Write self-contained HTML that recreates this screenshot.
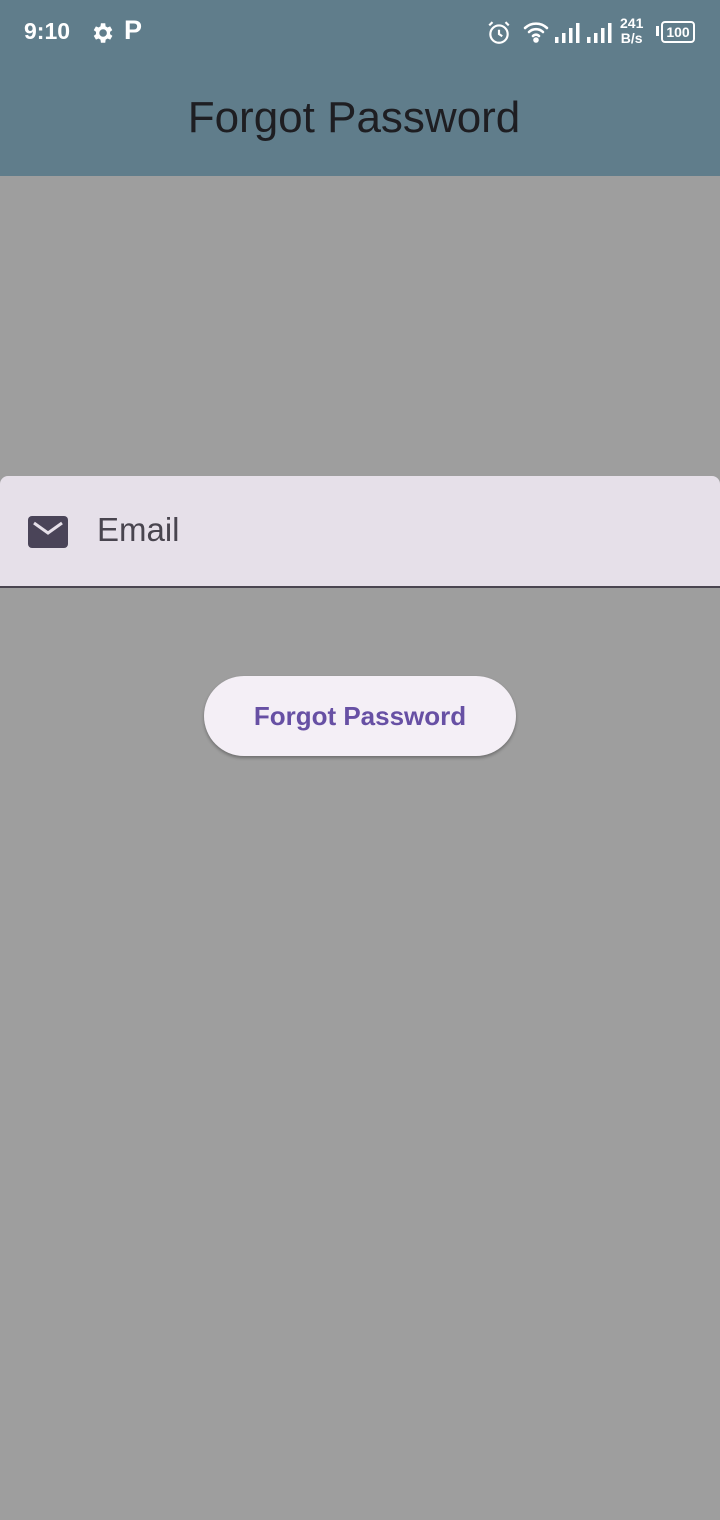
<!DOCTYPE html>
<html><head><meta charset="utf-8"><style>
html,body{margin:0;padding:0}
body{width:720px;height:1520px;background:#9e9e9e;position:relative;overflow:hidden;font-family:"Liberation Sans",sans-serif}
.top{position:absolute;left:0;top:0;width:720px;height:176px;background:#607d8b}
.abs{position:absolute}
</style></head><body>
<div class="top"></div>
<div class="abs" style="left:24px;top:18px;color:#fff;font-size:23px;font-weight:bold">9:10</div>
<svg class="abs" style="left:89px;top:20px" width="26" height="26" viewBox="0 0 24 24"><path fill="#fff" d="M19.4 13a7.5 7.5 0 0 0 0-2l2.1-1.6-2-3.5-2.5 1a7 7 0 0 0-1.7-1L15 3h-4l-.4 2.9a7 7 0 0 0-1.7 1l-2.5-1-2 3.5L6.5 11a7.5 7.5 0 0 0 0 2l-2.1 1.6 2 3.5 2.5-1a7 7 0 0 0 1.7 1L11 21h4l.4-2.9a7 7 0 0 0 1.7-1l2.5 1 2-3.5zM13 15.5A3.5 3.5 0 1 1 13 8.5a3.5 3.5 0 0 1 0 7z"/></svg>
<div class="abs" style="left:124px;top:15px;color:#fff;font-size:27px;font-weight:bold">P</div>
<svg class="abs" style="left:486px;top:20px" width="26" height="26" viewBox="0 0 24 24" fill="none" stroke="#fff" stroke-width="2"><circle cx="12" cy="13" r="8"/><path d="M12 9v4l3 2M3 5l3-3M21 5l-3-3"/></svg>
<svg class="abs" style="left:522px;top:20px" width="28" height="24" viewBox="0 0 28 24" fill="none" stroke="#fff" stroke-width="2.6" stroke-linecap="round"><path d="M3 8a16 16 0 0 1 22 0M7 12a10 10 0 0 1 14 0M11 16a4 4 0 0 1 6 0"/><circle cx="14" cy="20" r="1.5" fill="#fff"/></svg>
<svg class="abs" style="left:554px;top:22px" width="60" height="22" viewBox="0 0 60 22" fill="#fff"><rect x="1" y="15" width="3.5" height="6"/><rect x="8" y="11" width="3.5" height="10"/><rect x="15" y="6" width="3.5" height="15"/><rect x="22" y="1" width="3.5" height="20"/><rect x="33" y="15" width="3.5" height="6"/><rect x="40" y="11" width="3.5" height="10"/><rect x="47" y="6" width="3.5" height="15"/><rect x="54" y="1" width="3.5" height="20"/></svg>
<div class="abs" style="left:620px;top:16px;color:#fff;font-size:14px;line-height:15px;text-align:center;font-weight:bold">241<br>B/s</div>
<div class="abs" style="left:656px;top:26px;width:3px;height:10px;background:#fff"></div>
<div class="abs" style="left:661px;top:21px;width:30px;height:18px;border:2px solid #fff;border-radius:4px;color:#fff;font-size:14px;font-weight:bold;text-align:center;line-height:18px">100</div>
<div class="abs" style="left:-6px;width:720px;top:93px;text-align:center;font-size:44px;color:#1e1e22">Forgot Password</div>
<div class="abs" style="left:0;top:476px;width:720px;height:110px;background:#e6e0e9;border-radius:8px 8px 0 0;border-bottom:2px solid #4a4550"></div>
<svg class="abs" style="left:28px;top:516px" width="40" height="33" viewBox="0 0 40 33"><rect x="0" y="0" width="40" height="32" rx="4" fill="#4a4458"/><path d="M6 7l14 10 14-10" stroke="#e6e0e9" stroke-width="3" fill="none"/></svg>
<div class="abs" style="left:97px;top:511px;font-size:33px;color:#49454f">Email</div>
<div class="abs" style="left:204px;top:676px;width:312px;height:80px;border-radius:40px;background:#f4eff6;box-shadow:0 2px 3px rgba(0,0,0,0.3);text-align:center;line-height:80px;font-size:26px;color:#6750a4;font-weight:bold">Forgot Password</div>
</body></html>
